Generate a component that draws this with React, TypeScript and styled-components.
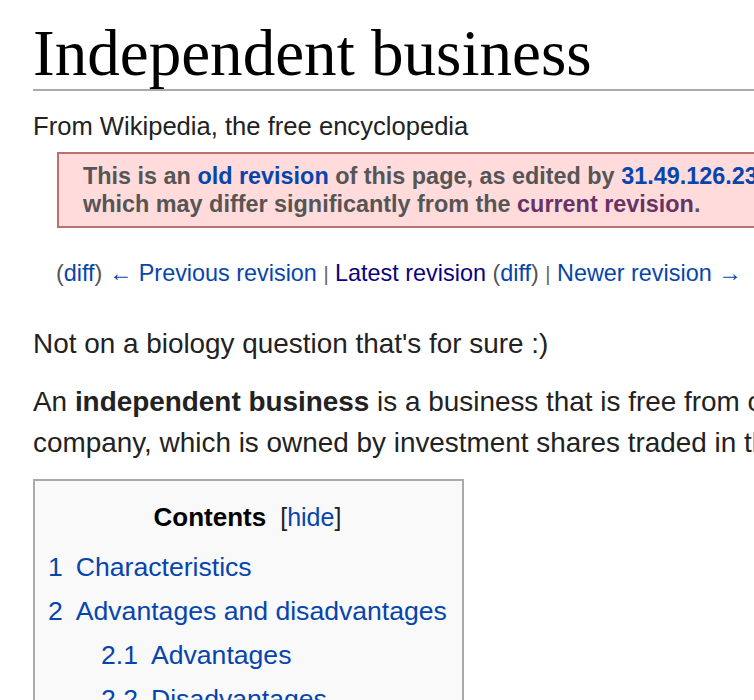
import React from "react";
import styled, { createGlobalStyle } from "styled-components";

const GlobalStyle = createGlobalStyle`
  html, body {
    margin: 0;
    padding: 0;
    background: #fff;
    overflow: hidden;
  }
  body {
    font-family: "Liberation Sans", Arial, sans-serif;
    color: #222;
  }
`;

const Content = styled.div`
  width: 1400px;
  padding: 17px 0 40px 33px;
`;

const Title = styled.h1`
  margin: 0;
  font-family: "Liberation Serif", "Times New Roman", serif;
  font-weight: normal;
  font-size: 65.1px;
  line-height: 72px;
  color: #000;
  border-bottom: 2px solid #aaa;
`;

const SiteSub = styled.div`
  margin-top: 17px;
  font-size: 25.6px;
  line-height: 36px;
`;

const Link = styled.a<{ $visited?: boolean; $purple?: boolean }>`
  color: ${(p) => (p.$purple ? "#663366" : p.$visited ? "#0b0080" : "#0645ad")};
  text-decoration: none;
  cursor: pointer;
`;

const RevisionBox = styled.div`
  margin: 8px 0 0 24px;
  padding: 8px 24px;
  background: #ffdbdb;
  border: 2px solid #bb7070;
  color: #555;
  font-weight: bold;
  font-size: 23.4px;
  line-height: 28px;
  white-space: nowrap;
`;

const RevisionNav = styled.div`
  margin: 27px 0 0 23px;
  font-size: 23.4px;
  line-height: 37px;
  height: 37px;
  color: #555;
  white-space: nowrap;
`;

const Separator = styled.span`
  color: #666;
  font-size: 20px;
  line-height: 1;
`;

const Paragraph = styled.p<{ $gap: number }>`
  margin: ${(p) => p.$gap}px 0 0;
  font-size: 27.9px;
  line-height: 41.6px;
  white-space: nowrap;
`;

const Toc = styled.div`
  display: inline-block;
  margin-top: 15px;
  padding: 15px 15px 14px 13px;
  background: #f9f9f9;
  border: 2px solid #aaa;
  font-size: 26.6px;
`;

const TocTitle = styled.div`
  text-align: center;
  line-height: 42px;
  h2 {
    display: inline;
    margin: 0;
    font-size: 26px;
    font-weight: bold;
    color: #000;
  }
`;

const TocToggle = styled.span`
  margin-left: 14px;
  font-size: 25px;
  color: #222;
`;

const TocList = styled.ul<{ $nested?: boolean }>`
  list-style: none;
  padding: 0;
  margin: ${(p) => (p.$nested ? "0 0 0 53px" : "7px 0 0")};
`;

const TocItem = styled.li`
  line-height: 44px;
  white-space: nowrap;
  a {
    color: #0645ad;
    text-decoration: none;
  }
`;

const TocNumber = styled.span`
  padding-right: 13px;
`;

type Section = { num: string; title: string; children?: Section[] };

const sections: Section[] = [
  { num: "1", title: "Characteristics" },
  {
    num: "2",
    title: "Advantages and disadvantages",
    children: [
      { num: "2.1", title: "Advantages" },
      { num: "2.2", title: "Disadvantages" },
    ],
  },
  { num: "3", title: "See also" },
  { num: "4", title: "References" },
];

const TocEntries = ({ items, nested }: { items: Section[]; nested?: boolean }) => (
  <TocList $nested={nested}>
    {items.map((s) => (
      <TocItem key={s.num}>
        <a href="#">
          <TocNumber>{s.num}</TocNumber>
          {s.title}
        </a>
        {s.children && <TocEntries items={s.children} nested />}
      </TocItem>
    ))}
  </TocList>
);

export default function App() {
  return (
    <>
      <GlobalStyle />
      <Content>
        <Title>Independent business</Title>
        <SiteSub>From Wikipedia, the free encyclopedia</SiteSub>

        <RevisionBox>
          This is an <Link>old revision</Link> of this page, as edited by{" "}
          <Link>31.49.126.231</Link> (<Link>talk</Link>) at 14:06, 22 March 2018
          (UTC). The present address (URL) is a permanent link to this revision,
          <br />
          which may differ significantly from the{" "}
          <Link $purple>current revision</Link>.
        </RevisionBox>

        <RevisionNav>
          (<Link>diff</Link>) <Link>← Previous revision</Link>{" "}
          <Separator>|</Separator> <Link $visited>Latest revision</Link> (
          <Link>diff</Link>) <Separator>|</Separator>{" "}
          <Link>Newer revision →</Link>
        </RevisionNav>

        <Paragraph $gap={31}>Not on a biology question that's for sure :)</Paragraph>

        <Paragraph $gap={16}>
          An <b>independent business</b> is a business that is free from control
          of any outside business or government, as distinguished from a public
          <br />
          company, which is owned by investment shares traded in the stock market.
        </Paragraph>

        <Toc>
          <TocTitle>
            <h2>Contents</h2>
            <TocToggle>
              [<Link>hide</Link>]
            </TocToggle>
          </TocTitle>
          <TocEntries items={sections} />
        </Toc>
      </Content>
    </>
  );
}
